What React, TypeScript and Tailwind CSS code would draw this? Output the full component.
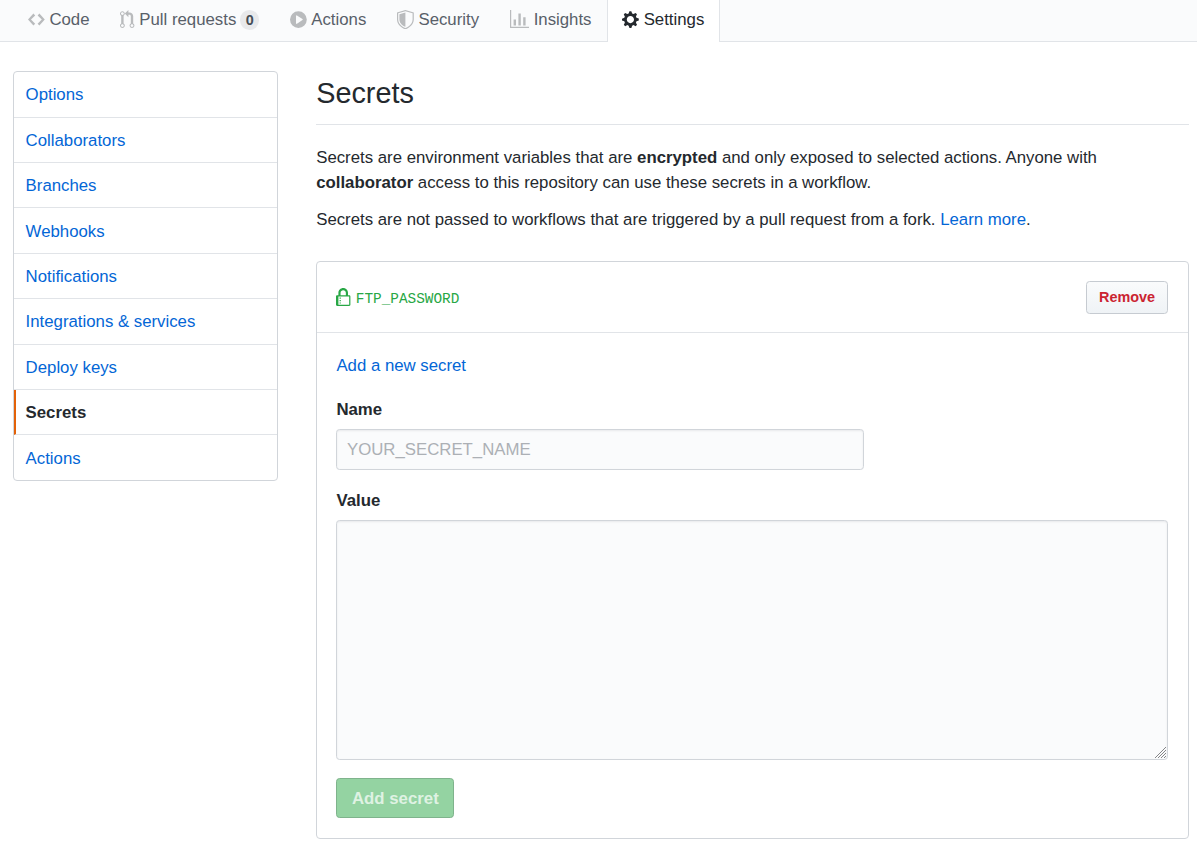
import clsx from "clsx";
import type { ReactNode } from "react";

interface Icon {
  width: number;
  path: string;
}

const icons: Record<string, Icon> = {
  code: {
    width: 14,
    path: "M9.5 3L8 4.5 11.5 8 8 11.5 9.5 13 14 8 9.5 3zm-5 0L0 8l4.5 5L6 11.5 2.5 8 6 4.5 4.5 3z",
  },
  pull: {
    width: 12,
    path: "M11 11.28V5c-.03-.78-.34-1.47-.94-2.06C9.46 2.35 8.78 2.03 8 2H7V0L4 3l3 3V4h1c.27.02.48.11.69.31.21.2.3.42.31.69v6.28A1.993 1.993 0 0010 15a1.993 1.993 0 001-3.72zm-1 2.92c-.66 0-1.2-.55-1.2-1.2 0-.65.55-1.2 1.2-1.2.65 0 1.2.55 1.2 1.2 0 .65-.55 1.2-1.2 1.2zM4 3c0-1.11-.89-2-2-2a1.993 1.993 0 00-1 3.72v6.56A1.993 1.993 0 002 15a1.993 1.993 0 001-3.72V4.72c.59-.34 1-.98 1-1.72zm-.8 10c0 .66-.55 1.2-1.2 1.2-.65 0-1.2-.55-1.2-1.2 0-.65.55-1.2 1.2-1.2.65 0 1.2.55 1.2 1.2zM2 4.2C1.34 4.2.8 3.65.8 3c0-.65.55-1.2 1.2-1.2.65 0 1.2.55 1.2 1.2 0 .65-.55 1.2-1.2 1.2z",
  },
  play: {
    width: 14,
    path: "M14 8A7 7 0 110 8a7 7 0 0114 0zm-8.223 3.482l4.599-3.066a.5.5 0 000-.832L5.777 4.518A.5.5 0 005 4.934v6.132a.5.5 0 00.777.416z",
  },
  shield: {
    width: 14,
    path: "M0 2l7-2 7 2v6.02C14 12.69 8.69 16 7 16c-1.69 0-7-3.31-7-7.98V2zm1 .75L7 1l6 1.75v5.268C13 12.104 8.449 15 7 15c-1.449 0-6-2.896-6-6.982V2.75zm1 .75L7 2v12c-1.207 0-5-2.482-5-5.985V3.5z",
  },
  graph: {
    width: 16,
    path: "M16 14v1H0V0h1v14h15zM5 13H3V8h2v5zm4 0H7V3h2v10zm4 0h-2V6h2v7z",
  },
  gear: {
    width: 14,
    path: "M14 8.77v-1.6l-1.94-.64-.45-1.09.88-1.84-1.13-1.13-1.81.91-1.09-.45-.69-1.92h-1.6l-.63 1.94-1.11.45-1.84-.88-1.13 1.13.91 1.81-.45 1.09L0 7.23v1.59l1.94.64.45 1.09-.88 1.84 1.13 1.13 1.81-.91 1.09.45.69 1.92h1.59l.63-1.94 1.11-.45 1.84.88 1.13-1.13-.92-1.81.47-1.09L14 8.75v.02zM7 11c-1.66 0-3-1.34-3-3s1.34-3 3-3 3 1.34 3 3-1.34 3-3 3z",
  },
  lock: {
    width: 12,
    path: "M4 13H3v-1h1v1zm8-6v7c0 .55-.45 1-1 1H1c-.55 0-1-.45-1-1V7c0-.55.45-1 1-1h1V4c0-2.2 1.8-4 4-4s4 1.8 4 4v2h1c.55 0 1 .45 1 1zM3.8 6h4.41V4c0-1.22-.98-2.2-2.2-2.2-1.22 0-2.2.98-2.2 2.2v2H3.8zM11 7H2v7h9V7zM4 8H3v1h1V8zm0 2H3v1h1v-1z",
  },
};

function Octicon({ name, className }: { name: string; className?: string }) {
  const { width, path } = icons[name];
  return (
    <svg
      viewBox={`0 0 ${width} 16`}
      width={width * 1.2}
      height={19.2}
      className={clsx("shrink-0 fill-current", className)}
    >
      <path fillRule="evenodd" d={path} />
    </svg>
  );
}

const tabs = [
  { label: "Code", icon: "code" },
  { label: "Pull requests", icon: "pull", count: 0 },
  { label: "Actions", icon: "play" },
  { label: "Security", icon: "shield" },
  { label: "Insights", icon: "graph" },
  { label: "Settings", icon: "gear" },
];

const menu = [
  "Options",
  "Collaborators",
  "Branches",
  "Webhooks",
  "Notifications",
  "Integrations & services",
  "Deploy keys",
  "Secrets",
  "Actions",
];

function RepoNav({ selected }: { selected: string }) {
  return (
    <nav className="flex h-[42px] border-b border-[#e1e4e8] bg-[#fafbfc] pl-[12.6px]">
      {tabs.map((t) => {
        const active = t.label === selected;
        return (
          <a
            key={t.label}
            href="#"
            className={clsx(
              "flex h-[42px] items-center border-x px-[14.4px] pb-[3px]",
              active
                ? "border-[#e1e4e8] bg-white text-[#24292e]"
                : "border-transparent text-[#586069]",
            )}
          >
            <Octicon name={t.icon} className={clsx("mr-[4.6px]", !active && "text-[#b9bbbd]")} />
            {t.label}
            {t.count !== undefined && (
              <span className="mt-px ml-1 rounded-full bg-[#e8e9eb] px-[5.4px] py-[2.4px] text-[14.4px] leading-[14.4px] font-bold text-[#444d56]">
                {t.count}
              </span>
            )}
          </a>
        );
      })}
    </nav>
  );
}

function SideMenu({ selected }: { selected: string }) {
  return (
    <nav className="h-[409.6px] w-[265px] shrink-0 overflow-hidden rounded-[4px] border border-[#d1d5da]">
      {menu.map((item) => (
        <a
          key={item}
          href="#"
          className={clsx(
            "block h-[45.4px] border-b border-[#e1e4e8] pt-[10.25px] last:border-b-0",
            item === selected
              ? "border-l-2 border-l-[#e36209] pl-[9.6px] font-bold text-[#24292e]"
              : "pl-[11.6px] text-[#0366d6]",
          )}
        >
          {item}
        </a>
      ))}
    </nav>
  );
}

function Label({ htmlFor, children }: { htmlFor: string; children: ReactNode }) {
  return (
    <label htmlFor={htmlFor} className="mb-[7.2px] block font-bold">
      {children}
    </label>
  );
}

// diagonal hatch in the corner of the textarea
function ResizeGrip() {
  return (
    <svg
      viewBox="0 0 11 11"
      width="11"
      height="11"
      className="pointer-events-none absolute right-[2px] bottom-[2px]"
      stroke="#77787a"
      strokeWidth="0.9"
    >
      <path d="M0 11L11 0M3 11l8-8M6 11l5-5M9 11l2-2" />
    </svg>
  );
}

export default function App() {
  return (
    <div className="h-[853px] overflow-hidden bg-white font-['Liberation_Sans',Arial,sans-serif] text-[16.8px] leading-[25.2px] text-[#24292e]">
      <RepoNav selected="Settings" />
      <div className="flex gap-[38.2px] pt-[29.2px] pr-2 pl-[13px]">
        <SideMenu selected="Secrets" />
        <main className="min-w-0 flex-1">
          <h2 className="mb-[19.7px] border-b border-[#e1e4e8] pt-[0.8px] pb-[8.8px] text-[28.8px] leading-[43.2px]">
            Secrets
          </h2>
          <p className="mb-3">
            Secrets are environment variables that are <strong>encrypted</strong> and only exposed to
            selected actions. Anyone with <strong>collaborator</strong> access to this repository can
            use these secrets in a workflow.
          </p>
          <p>
            Secrets are not passed to workflows that are triggered by a pull request from a fork.{" "}
            <a href="#" className="text-[#0366d6]">
              Learn more
            </a>
            .
          </p>

          <section className="mt-[28.5px] h-[578px] rounded-[4px] border border-[#d1d5da]">
            <div className="flex h-[71px] items-center border-b border-[#e1e4e8] pr-5 pl-[19.2px] text-[#28a745]">
              <Octicon name="lock" className="mt-0.5" />
              <code className="ml-[5px] pt-[5px] font-['Liberation_Mono',monospace] text-[14.4px]">
                FTP_PASSWORD
              </code>
              <button className="mt-px ml-auto h-[33px] w-[82px] rounded-[3.6px] border border-[#c6cbd1] bg-linear-to-b from-[#fafbfc] to-[#eff3f6] pb-0.5 text-[14.4px] leading-[30px] font-bold text-[#cb2431]">
                Remove
              </button>
            </div>
            <form className="pt-[19.9px] pr-5 pl-[19.2px]">
              <a href="#" className="mb-[18.9px] block text-[#0366d6]">
                Add a new secret
              </a>
              <Label htmlFor="name">Name</Label>
              <input
                id="name"
                placeholder="YOUR_SECRET_NAME"
                className="mb-[17.6px] block h-[41px] w-[528px] rounded-[3.6px] border border-[#d1d5da] bg-[#fafbfc] px-[9.6px] shadow-[inset_0_1px_2px_rgba(27,31,35,0.075)] outline-none placeholder:text-[#acb0b5]"
              />
              <Label htmlFor="value">Value</Label>
              <div className="relative mb-[18px]">
                <textarea
                  id="value"
                  className="block h-60 w-full resize-none rounded-[3.6px] border border-[#d1d5da] bg-[#fafbfc] shadow-[inset_0_1px_2px_rgba(27,31,35,0.075)] outline-none"
                />
                <ResizeGrip />
              </div>
              <button
                type="button"
                disabled
                className="h-10 w-[118px] rounded-[3.6px] border border-[#7fb38c] bg-[#94d3a2] pt-px font-bold text-[#dff2e3]"
              >
                Add secret
              </button>
            </form>
          </section>
        </main>
      </div>
    </div>
  );
}
